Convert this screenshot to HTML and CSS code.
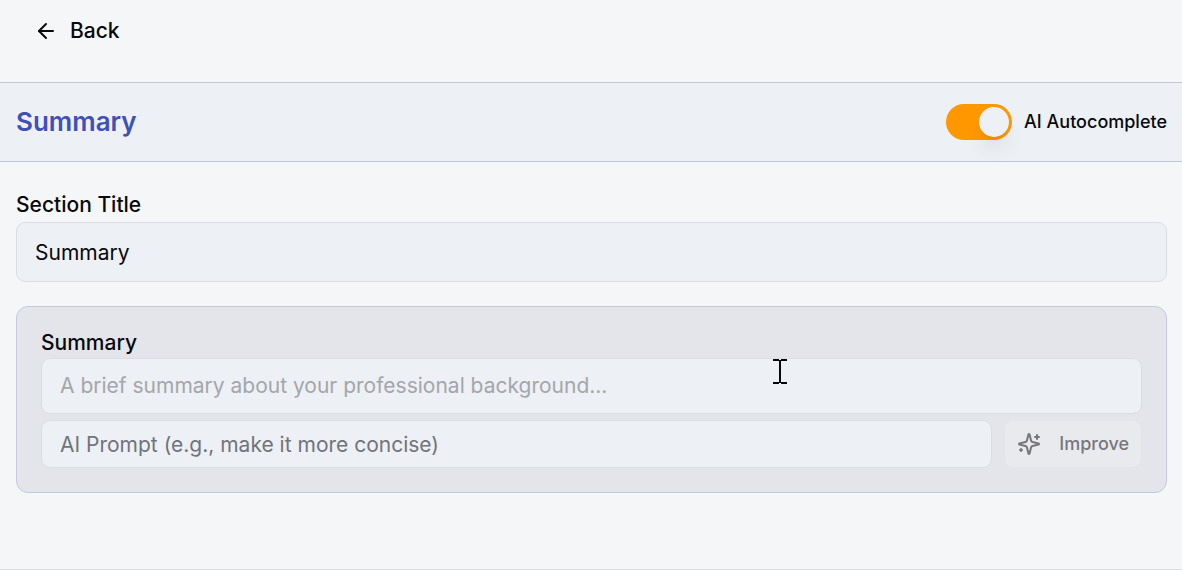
FILE: index.html
```html
<!DOCTYPE html>
<html lang="en">
<head>
<meta charset="utf-8">
<meta name="viewport" content="width=device-width, initial-scale=1">
<title>Summary</title>
<link rel="stylesheet" href="styles.css">
</head>
<body>
<nav class="topbar">
  <button class="back" type="button">
    <svg class="icon" viewBox="0 0 24 24" aria-hidden="true"><path d="m12 19-7-7 7-7"/><path d="M19 12H5"/></svg>
    Back
  </button>
</nav>
<header class="section-header">
  <h1 class="section-heading">Summary</h1>
  <label class="toggle">
    <input class="switch" type="checkbox" role="switch" checked>
    AI Autocomplete
  </label>
</header>
<main class="content">
  <div class="field">
    <label class="label" for="title">Section Title</label>
    <input class="input input-title" id="title" type="text" value="Summary">
  </div>
  <section class="card">
    <div class="field field-compact">
      <label class="label" for="summary">Summary</label>
      <textarea class="input input-summary" id="summary" rows="1" placeholder="A brief summary about your professional background..."></textarea>
    </div>
    <div class="prompt-row">
      <input class="input input-prompt" type="text" aria-label="AI Prompt" placeholder="AI Prompt (e.g., make it more concise)">
      <button class="improve" type="button" disabled>
        <svg class="icon" viewBox="0 0 24 24" aria-hidden="true"><path d="M9.937 15.5A2 2 0 0 0 8.5 14.063l-6.135-1.582a.5.5 0 0 1 0-.962L8.5 9.936A2 2 0 0 0 9.937 8.5l1.582-6.135a.5.5 0 0 1 .963 0L14.063 8.5A2 2 0 0 0 15.5 9.937l6.135 1.581a.5.5 0 0 1 0 .964L15.5 14.063a2 2 0 0 0-1.437 1.437l-1.582 6.135a.5.5 0 0 1-.963 0z"/><path d="M20 3v4"/><path d="M22 5h-4"/><path d="M4 17v2"/><path d="M5 18H3"/></svg>
        Improve
      </button>
    </div>
    <svg class="cursor" viewBox="0 0 14 25" aria-hidden="true"><path d="M0 1h6M8 1h6M0 24h6M8 24h6M7 1v23"/></svg>
  </section>
</main>
</body>
</html>
```
FILE: styles.css
```css
* {
  box-sizing: border-box;
}

body {
  margin: 0;
  min-height: 100vh;
  display: flex;
  flex-direction: column;
  background: #f5f6f8;
  border-bottom: 1px solid #dcdfe5;
  color: #09090b;
  font-family: Inter, "Liberation Sans", sans-serif;
  font-size: 21px;
  line-height: 30px;
}

button,
input,
textarea {
  font: inherit;
  color: inherit;
}

.icon {
  width: 24px;
  height: 24px;
  flex: none;
  fill: none;
  stroke: currentColor;
  stroke-width: 2;
  stroke-linecap: round;
  stroke-linejoin: round;
}

.topbar {
  padding: 16px 34px 36px;
}

.back {
  display: flex;
  align-items: center;
  gap: 12px;
  padding: 0;
  border: 0;
  background: none;
  font-weight: 500;
}

.section-header {
  display: flex;
  align-items: center;
  justify-content: space-between;
  height: 80px;
  padding: 0 15px 0 16px;
  background: #edf0f5;
  border: solid #c0c8d5;
  border-width: 1px 0;
}

.section-heading {
  margin: 0;
  color: #3f51b5;
  font-size: 26px;
  font-weight: 600;
}

.toggle {
  display: flex;
  align-items: center;
  gap: 12px;
  font-size: 18px;
  font-weight: 500;
}

.switch {
  appearance: none;
  display: flex;
  align-items: center;
  justify-content: flex-end;
  width: 66px;
  height: 36px;
  margin: 0;
  padding: 3px;
  border-radius: 18px;
  background: #ff9800;
}

.switch::before {
  content: "";
  width: 30px;
  height: 30px;
  border-radius: 50%;
  background: #edf0f5;
  box-shadow: 0 15px 22px -4px rgb(0 0 0 / 10%), 0 6px 9px -6px rgb(0 0 0 / 10%);
}

.switch:not(:checked) {
  justify-content: flex-start;
  background: #c0c8d5;
}

.content {
  display: flex;
  flex-direction: column;
  gap: 24px;
  padding: 28px 15px 24px 16px;
}

.field {
  display: flex;
  flex-direction: column;
  gap: 2px;
}

.field-compact {
  gap: 0;
}

.label {
  font-weight: 500;
}

.input {
  display: block;
  width: 100%;
  margin: 0;
  padding: 0 18px;
  border: 1px solid #dadde4;
  border-radius: 9px;
  background: #edf0f5;
  outline: none;
  resize: none;
}

.input-title {
  height: 60px;
}

.input-summary {
  height: 56px;
  padding-block: 12px;
}

.input-summary::placeholder {
  color: #a4a6aa;
}

.input-prompt {
  flex: 1;
  height: 48px;
}

.input-prompt::placeholder {
  color: #71747b;
}

.card {
  position: relative;
  display: flex;
  flex-direction: column;
  gap: 6px;
  padding: 21px 24px 24px;
  border: 1px solid #c3c8e2;
  border-radius: 12px;
  background: #e4e5ea;
}

.prompt-row {
  display: flex;
  gap: 12px;
}

.improve {
  display: flex;
  align-items: center;
  gap: 18px;
  padding: 0 12px;
  border: 1px solid #e2e4e9;
  border-radius: 9px;
  background: #e9eaee;
  color: #77777c;
  font-size: 18px;
  font-weight: 500;
}

/* Text pointer hovering over the summary field */
.cursor {
  position: absolute;
  left: 756px;
  top: 52px;
  width: 14px;
  height: 25px;
  fill: none;
  stroke: #09090b;
  stroke-width: 2;
  pointer-events: none;
}
```
